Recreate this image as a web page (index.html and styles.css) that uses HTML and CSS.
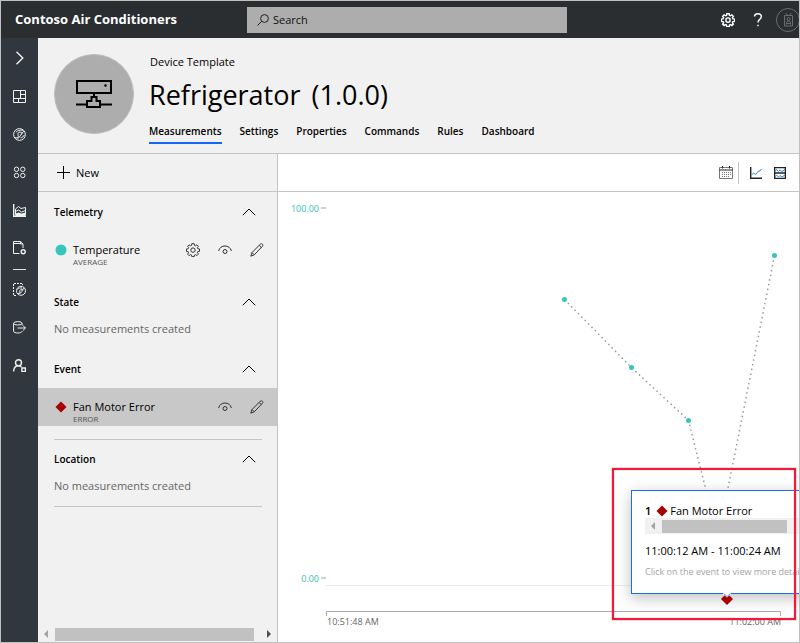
FILE: index.html
```html
<!DOCTYPE html>
<html lang="en">
<head>
<meta charset="utf-8">
<meta name="viewport" content="width=device-width, initial-scale=1">
<title>Contoso Air Conditioners</title>
<link rel="stylesheet" href="styles.css">
</head>
<body>
<svg class="defs" aria-hidden="true">
  <symbol id="gear" viewBox="0 0 14 14"><path d="M5.8 .7h2.4l.3 1.7 1 .4 1.4-1 1.500 1.500-1 1.400.4 1 1.700.3v2.400l-1.700.3-.4 1 1 1.400-1.500 1.500-1.400-1-1 .4-.3 1.600H5.800l-.3-1.600-1-.4-1.400 1-1.500-1.500 1-1.400-.4-1L.5 8.400V6l1.700-.3.4-1-1-1.400 1.500-1.500 1.400 1 1-.4z"/><circle cx="7" cy="7.100" r="2.200"/></symbol>
  <symbol id="up" viewBox="0 0 14 8"><path d="M.8 7.200 7 1l6.200 6.200"/></symbol>
  <symbol id="eye" viewBox="0 0 14 10"><path d="M.6 6C1.400 2.600 4 1 7 1s5.600 1.600 6.400 5"/><circle cx="7" cy="6.500" r="2"/></symbol>
  <symbol id="pencil" viewBox="0 0 14 14"><path d="M.8 13.200 2 9.500 10.300 1.200c.7-.7 1.500-.6 2.100 0s.7 1.400 0 2.100L4.300 11.800zM2 9.500l2.300 2.300M9.200 2.400l2.300 2.300"/></symbol>
</svg>

<header class="topbar">
  <div class="brand">Contoso Air Conditioners</div>
  <label class="search">
    <svg class="icon" width="12" height="12" viewBox="0 0 12 12"><circle cx="7.500" cy="4.500" r="3.900"/><path d="M4.700 7.300.5 11.500"/></svg>
    <input type="search" placeholder="Search" aria-label="Search">
  </label>
  <nav class="account" aria-label="Account">
    <button aria-label="Settings"><svg class="icon bold" width="14" height="14"><use href="#gear"/></svg></button>
    <button aria-label="Help"><svg class="icon" width="10" height="14" viewBox="0 0 10 14"><path class="thick" d="M1.500 3.600C1.500 1.800 3 .8 4.800.8s3.500 1 3.500 2.900C8.300 6.200 5 6.300 5 9.500M5 11.700v1.500"/></svg></button>
    <button class="avatar" aria-label="Profile"><svg class="icon" width="24" height="24" viewBox="0 0 24 24"><circle cx="12" cy="12" r="11.500"/><path d="M8.500 7.500h8v10.500h-8zM9.800 5l1.700 2.500M15.200 5l-1.700 2.500M10.500 16.500v-2l1-1.500h2l1 1.500v2M11 15.500h3"/><circle cx="12.500" cy="11" r="1.500"/></svg></button>
  </nav>
</header>

<div class="shell">
  <nav class="rail" aria-label="Main">
    <button aria-label="Expand"><svg class="icon bold" width="13" height="14" viewBox="0 0 13 14"><path class="thick" d="M3.500 .8 9.800 7l-6.300 6.200"/></svg></button>
    <button aria-label="Dashboard"><svg class="icon" width="13" height="13" viewBox="0 0 13 13"><path d="M.5.5h12v12H.5zM7.500.5v8M.5 8.500h12M7.500 4.500h5M5.500 8.500v4"/></svg></button>
    <button aria-label="Explorer"><svg class="icon" width="13" height="13" viewBox="0 0 13 13"><circle cx="6.500" cy="6.500" r="5.900"/><path d="M2 9.800c3 .3 3.800-1 3.200-2.500C4.600 5.800 5.200 4 7 4s2.500 1.500 1.500 2.500L4.500 11M11 3.200 7.600 6.500M3 4.200c1.500-1.700 4-2.400 7-2M7.500 9.800c1.700 0 3.200-1.400 3.800-3"/></svg></button>
    <button aria-label="Device sets"><svg class="icon" width="13" height="13" viewBox="0 0 13 13"><circle cx="3.500" cy="3.300" r="2.200"/><circle cx="9.800" cy="3.300" r="2.200"/><circle cx="3.500" cy="9.500" r="2.200"/><circle cx="9.800" cy="9.500" r="2.200"/></svg></button>
    <button aria-label="Analytics"><svg class="icon" width="13" height="13" viewBox="0 0 13 13"><path class="thick" d="M.7 0v12.300H13"/><path d="M2.500 10.500V5l3-2.500L8 4.500l4.500-1v7z"/><path d="m2.500 7.500 3-1.500 3 2 4-1.500"/><path class="solid" d="m2.500 9.500 3-1 3 1 4-1v3.500h-10z"/></svg></button>
    <button aria-label="Jobs"><svg class="icon" width="13" height="14" viewBox="0 0 13 14"><path d="M6.500 12.500h-6V.5h7l2.500 2.500v4M7.500.5V3H10M1 2.500h6"/><circle class="thick" cx="10.200" cy="10.700" r="2"/></svg></button>
    <hr>
    <button aria-label="Device templates"><svg class="icon" width="13" height="13" viewBox="0 0 13 13"><path class="dash" d="M3 12.500H.5V.5h9V2"/><circle cx="8" cy="7.800" r="4.500"/><path d="M5 10.500c2 0 1.800-1 1.800-2.300S8 6 9.300 6.300 9.500 8 8.500 8.800L6.500 11M11.300 5 8.500 7.500M4.500 6.500C5.500 5 7 4.600 9 5"/></svg></button>
    <button aria-label="Data export"><svg class="icon" width="13" height="13" viewBox="0 0 13 13"><ellipse cx="4.800" cy="2.300" rx="4.200" ry="1.700"/><path d="M.6 2.300v8c0 2.300 8.400 2.300 8.400 0M9 2.300v2M4.500 7h8M9.800 4.300 12.500 7 9.800 9.700"/></svg></button>
    <button aria-label="Administration"><svg class="icon bold" width="13" height="13" viewBox="0 0 13 13"><circle cx="5.500" cy="3.700" r="3"/><path d="M.6 12.500C.8 9 2.500 6.800 5.500 6.800c1.300 0 2.200.5 3 1.200M8.900 9h3.500v3.500H8.900z"/></svg></button>
  </nav>

  <main class="page">
    <header class="device">
      <div class="device-image">
        <svg width="36" height="28" viewBox="0 0 36 28"><path d="M1 1h34v12H1zM18 13v4M15.500 17h5v4h3.500v6H11v-6h4.500zM0 24.500h11M24 24.500h12"/><circle cx="29.500" cy="5.500" r="1.200"/></svg>
      </div>
      <div class="device-info">
        <div class="kind">Device Template</div>
        <h1>Refrigerator <span>(1.0.0)</span></h1>
        <nav class="tabs" aria-label="Template">
          <a class="current" href="#measurements">Measurements</a>
          <a href="#settings">Settings</a>
          <a href="#properties">Properties</a>
          <a href="#commands">Commands</a>
          <a href="#rules">Rules</a>
          <a href="#dashboard">Dashboard</a>
        </nav>
      </div>
    </header>

    <div class="work">
      <aside class="panel">
        <div class="panel-tools">
          <button class="new"><svg class="icon" width="13" height="13" viewBox="0 0 13 13"><path d="M6.500 0v13M0 6.500h13"/></svg>New</button>
        </div>
        <div class="groups">
          <section>
            <h2>Telemetry <button aria-label="Collapse telemetry"><svg class="icon" width="14" height="8"><use href="#up"/></svg></button></h2>
            <div class="item">
              <svg class="mark" width="12" height="12" viewBox="0 0 12 12"><circle cx="6" cy="6" r="5.500" fill="#35c5bb"/></svg>
              <div class="name">Temperature<small>AVERAGE</small></div>
              <button aria-label="Configure"><svg class="icon" width="14" height="14"><use href="#gear"/></svg></button>
              <button aria-label="Show or hide"><svg class="icon" width="14" height="10"><use href="#eye"/></svg></button>
              <button aria-label="Edit"><svg class="icon" width="14" height="14"><use href="#pencil"/></svg></button>
            </div>
          </section>
          <section>
            <h2>State <button aria-label="Collapse state"><svg class="icon" width="14" height="8"><use href="#up"/></svg></button></h2>
            <p>No measurements created</p>
          </section>
          <section>
            <h2>Event <button aria-label="Collapse event"><svg class="icon" width="14" height="8"><use href="#up"/></svg></button></h2>
            <div class="item selected">
              <svg class="mark" width="12" height="12" viewBox="0 0 12 12"><path d="m6 .5 5.500 5.500L6 11.500.5 6z" fill="#a80000"/></svg>
              <div class="name">Fan Motor Error<small>ERROR</small></div>
              <button aria-label="Show or hide"><svg class="icon" width="14" height="10"><use href="#eye"/></svg></button>
              <button aria-label="Edit"><svg class="icon" width="14" height="14"><use href="#pencil"/></svg></button>
            </div>
          </section>
          <section class="ruled">
            <h2>Location <button aria-label="Collapse location"><svg class="icon" width="14" height="8"><use href="#up"/></svg></button></h2>
            <p>No measurements created</p>
          </section>
          <section class="ruled"></section>
        </div>
        <div class="scroll">
          <svg width="16" height="16" viewBox="0 0 16 16"><path d="M10 4v8L6 8z" fill="#a3a3a3"/></svg>
          <div class="thumb"></div>
          <svg width="16" height="16" viewBox="0 0 16 16"><path d="M6 4v8l4-4z" fill="#505050"/></svg>
        </div>
      </aside>

      <div class="view">
        <div class="view-tools">
          <button aria-label="Date range"><svg class="icon" width="14" height="13" viewBox="0 0 14 13"><path class="soft" d="M.5 1.500h13v11H.5z"/><path d="M.5 4h13M3.500 0v2.500M10.500 0v2.500"/><path class="dots" d="M3 6.500h9M3 8.500h9M3 10.500h7"/></svg></button>
          <i></i>
          <button aria-label="Line chart"><svg class="icon" width="12" height="12" viewBox="0 0 12 12"><path class="thick" d="M.7 0v11.300H12"/><path class="blue" d="m1.500 8 2-2 2 1.500 3-3.500h1.500L11.500 2"/></svg></button>
          <button aria-label="Stacked charts"><svg class="icon" width="12" height="12" viewBox="0 0 12 12"><path class="thick" d="M.6.6h10.800v10.800H.6zM.6 6h10.800"/><path class="blue" d="m1 4.500 1.500-2 2 2L6 3l2 1.500L11 2.500M1 10l1.500-2 2 2L6 8.500 8 10l3-2"/></svg></button>
        </div>
        <div class="chart">
          <svg class="plot" viewBox="0 0 521 450" preserveAspectRatio="xMinYMin meet" role="img" aria-label="Temperature over time">
            <g class="y-label"><text x="41" y="20">100.00</text><text x="41" y="390">0.00</text></g>
            <path class="tick" d="M43 16h5M43 386h5"/>
            <path class="base" d="M48 393.500h473"/>
            <path class="axis" d="M48.500 424v-4.500h454v4.500"/>
            <g class="x-label"><text x="49" y="433">10:51:48 AM</text><text class="end" x="503" y="433">11:02:00 AM</text></g>
            <path class="trend" d="m286.500 107.500 67 68 57 53L440 346l56.500-282.500"/>
            <g class="points"><circle cx="286.500" cy="107.500" r="2.500"/><circle cx="353.500" cy="175.500" r="2.500"/><circle cx="410.500" cy="228.500" r="2.500"/><circle cx="496.500" cy="63.500" r="2.500"/></g>
          </svg>
          <div class="tip">
            <div class="tip-title"><b>1</b><svg width="12" height="12" viewBox="0 0 12 12"><path d="m6 .5 5.500 5.500L6 11.500.5 6z" fill="#a80000"/></svg>Fan Motor Error</div>
            <div class="scroll">
              <svg width="16" height="16" viewBox="0 0 16 16"><path d="M10 4v8L6 8z" fill="#a3a3a3"/></svg>
              <div class="thumb"></div>
              <svg width="16" height="16" viewBox="0 0 16 16"></svg>
            </div>
            <div class="time">11:00:12 AM - 11:00:24 AM</div>
            <div class="hint">Click on the event to view more details</div>
            <svg class="pin" width="14" height="14" viewBox="0 0 14 14"><path d="m7 1 6 6-6 6-6-6z" fill="#a80000"/><path d="M3 0v2l4 3.500L11 2V0z" fill="#fff"/><path d="m3.500 1.500 3.500 3 3.500-3" fill="none" stroke="#5b9bf8"/></svg>
          </div>
          <div class="callout"></div>
        </div>
      </div>
    </div>
  </main>
</div>
</body>
</html>
```
FILE: styles.css
```css
* { box-sizing: border-box; }

body {
  margin: 0;
  height: 100vh;
  display: flex;
  flex-direction: column;
  overflow: hidden;
  border: 1px solid #c0c0c0;
  background: #fff;
  color: #000;
  font: 11px/15px "Open Sans", "Noto Sans", sans-serif;
}

button {
  display: flex;
  align-items: center;
  justify-content: center;
  flex: none;
  padding: 0;
  border: 0;
  background: none;
  color: inherit;
  font: inherit;
}

h1, h2, p { margin: 0; }

.defs { position: absolute; width: 0; height: 0; }
.icon { flex: none; fill: none; stroke: currentColor; stroke-width: 1; }
.bold { stroke-width: 1.4; }
.thick { stroke-width: 1.4; }
.dash { stroke-dasharray: 2 1; }
.dots { stroke-dasharray: 1 1; stroke: #777; }
.soft { stroke: #777; }
.blue { stroke: #2b88d8; }
.solid { fill: currentColor; stroke: none; }

.topbar {
  display: flex;
  align-items: center;
  flex: none;
  height: 37px;
  padding-left: 14px;
  background: #2a2e31;
  color: #fff;
}
.brand { flex: none; width: 232px; font-size: 13px; font-weight: 700; }
.search {
  display: flex;
  align-items: center;
  gap: 4px;
  flex: 0 1 320px;
  height: 26px;
  padding-left: 10px;
  background: #adadad;
  color: #222;
}
.search input {
  flex: 1;
  min-width: 0;
  padding: 0;
  border: 0;
  background: none;
  font: inherit;
}
.search input::placeholder { color: #111; opacity: 1; }
.account { display: flex; margin: 0 -4px 0 auto; }
.account button { width: 30px; height: 35px; }
.account .avatar { color: #6b6e70; }

.shell { display: flex; flex: 1; min-height: 0; }
.rail { flex: none; width: 37px; padding-top: 1px; background: #30373f; color: #f0f0f0; }
.rail button { width: 37px; height: 38px; }
.rail hr { width: 13px; height: 1px; margin: 2px auto 0; border: 0; background: #e0e0e0; }

.page { display: flex; flex-direction: column; flex: 1; min-width: 0; background: #f1f1f1; }
.device {
  display: flex;
  gap: 15px;
  flex: none;
  height: 116px;
  padding: 16px;
  border-bottom: 1px solid #c4c4c4;
}
.device-image {
  display: flex;
  align-items: center;
  justify-content: center;
  flex: none;
  width: 80px;
  height: 80px;
  border: 1px solid #bebebe;
  border-radius: 50%;
  background: #adadad;
}
.device-image svg { fill: none; stroke: #000; stroke-width: 2; }
.device-image circle { fill: #000; stroke: none; }
.kind { padding-left: 1px; }
h1 { font-size: 27px; line-height: 40px; font-weight: 400; margin-top: 6px; }
h1 span { margin-left: 4px; }
.tabs { display: flex; gap: 18px; margin-top: 9px; font-size: 10px; }
.tabs a { padding-bottom: 3px; border-bottom: 2px solid transparent; color: #000; font-weight: 600; text-decoration: none; }
.tabs .current { border-color: #1168f5; }

.work { display: flex; flex: 1; min-height: 0; }
.panel {
  display: flex;
  flex-direction: column;
  flex: none;
  width: 240px;
  border-right: 1px solid #c4c4c4;
}
.panel-tools, .view-tools { display: flex; align-items: center; flex: none; height: 38px; border-bottom: 1px solid #c4c4c4; }
.new { gap: 6px; margin-left: 19px; }
.groups { flex: 1; min-height: 0; overflow: hidden; }
section { margin: 0 15px 0 16px; padding-bottom: 13px; border-top: 1px solid transparent; }
.ruled { border-color: #c4c4c4; }
h2 { display: flex; align-items: center; justify-content: space-between; height: 38px; padding-right: 5px; font-size: 10px; font-weight: 600; }
h2 button { width: 16px; height: 16px; }
p { color: #666; }
.item { display: flex; align-items: center; height: 38px; margin: 0 -15px 0 -16px; padding: 0 4px 0 17px; }
.selected { background: #c8c8c8; }
.item button { width: 32px; height: 38px; color: #333; }
.name { flex: 1; margin-left: 6px; padding-top: 10px; line-height: 14px; }
.name small { display: block; color: #555; font-size: 8px; line-height: 10px; }

.scroll { display: flex; align-items: center; flex: none; height: 16px; background: #f1f1f1; }
.scroll .thumb { flex: 1; height: 13px; margin: 0 7px 0 1px; background: #c1c1c1; }
.scroll svg { flex: none; }

.view { display: flex; flex-direction: column; flex: 1; min-width: 0; background: #fff; }
.view-tools { justify-content: flex-end; padding-right: 7px; color: #222; }
.view-tools button { width: 24px; height: 24px; }
.view-tools i { width: 1px; height: 22px; margin-right: 5px; background: #c4c4c4; }
.chart { position: relative; flex: 1; min-height: 0; overflow: hidden; }
.plot { display: block; width: 100%; height: 100%; }
.y-label { fill: #35bdb4; font-size: 9px; text-anchor: end; }
.x-label { fill: #666; font-size: 9px; }
.end { text-anchor: end; }
.plot path { fill: none; }
.tick { stroke: #d2d2d2; stroke-width: 2; }
.base { stroke: #ebebeb; }
.axis { stroke: #aaa; }
.trend { stroke: #999; stroke-width: 1.5; stroke-dasharray: 1.5 3.3; }
.points { fill: #35c5bb; }

.tip {
  position: absolute;
  right: -48px;
  bottom: 48px;
  width: 216px;
  height: 104px;
  padding: 12px 13px;
  border: 1px solid #1a6cf0;
  background: #fff;
  box-shadow: 0 4px 14px rgba(0, 0, 0, .25);
  white-space: nowrap;
}
.tip-title { display: flex; align-items: center; }
.tip-title svg { margin: 0 2px 0 5px; }
.tip-title b { font-weight: 600; }
.tip .scroll { width: 165px; }
.time { margin-top: 9px; }
.hint { margin-top: 6px; color: #a3a3a3; font-size: 9px; }
.pin { position: absolute; left: 88px; top: 101px; }
.callout {
  position: absolute;
  right: 3px;
  bottom: 22px;
  width: 184px;
  height: 152px;
  border: 2px solid #ee1c3a;
  box-shadow: 0 0 1px #ee1c3a, inset 0 0 1px #ee1c3a;
}
```
